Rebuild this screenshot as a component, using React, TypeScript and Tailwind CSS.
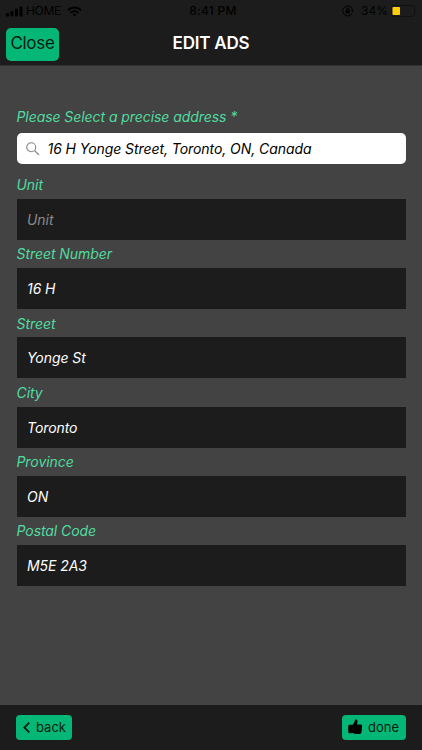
const fields = [
  { label: 'Unit', value: '' },
  { label: 'Street Number', value: '16 H' },
  { label: 'Street', value: 'Yonge St' },
  { label: 'City', value: 'Toronto' },
  { label: 'Province', value: 'ON' },
  { label: 'Postal Code', value: 'M5E 2A3' },
];

function StatusBar() {
  return (
    <div className="grid grid-cols-3 items-center h-[22px] pl-[6px] pr-[5px] text-[12px] text-black">
      <div className="flex items-center">
        <svg width="17" height="11" viewBox="0 0 17 11" fill="currentColor">
          <rect x="0" y="7" width="3" height="3.5" rx="0.8" />
          <rect x="4.5" y="5" width="3" height="5.5" rx="0.8" />
          <rect x="9" y="2.8" width="3" height="7.7" rx="0.8" />
          <rect x="13.5" y="0.5" width="3" height="10" rx="0.8" />
        </svg>
        <span className="ml-[3px] tracking-[-0.3px]">HOME</span>
        <svg className="ml-[6px]" width="15" height="11" viewBox="0 0 15 11" fill="none" stroke="currentColor" strokeWidth="2">
          <path d="M1 4.2 A9.3 9.3 0 0 1 14 4.2" />
          <path d="M3.6 6.9 A5.6 5.6 0 0 1 11.4 6.9" />
          <path d="M7.5 10.5 L5.5 8.6 A2.9 2.9 0 0 1 9.5 8.6 Z" fill="currentColor" stroke="none" />
        </svg>
      </div>
      <div className="pl-[3px] text-center font-medium tracking-[0.3px]">8:41 PM</div>
      <div className="flex items-center justify-end">
        <svg width="12" height="12" viewBox="0 0 12 12" fill="none" stroke="currentColor">
          <path d="M10.5 4.3 A5 5 0 1 0 10.2 8.2" />
          <path d="M8.8 5 L12 5 L10.5 7 Z" fill="currentColor" stroke="none" />
          <rect x="3.7" y="5.2" width="4" height="3.3" fill="currentColor" stroke="none" />
          <path d="M4.6 5.5 V4.2 A1.1 1.1 0 0 1 6.8 4.2 V5.5" />
        </svg>
        <span className="ml-[7px]">34%</span>
        <svg className="ml-[3px]" width="26" height="12" viewBox="0 0 26 12">
          <rect x="0.5" y="0.5" width="23" height="11" rx="2.5" fill="none" stroke="#111" />
          <rect x="1.5" y="2" width="7.5" height="8" rx="0.8" fill="#ffcc08" />
          <path d="M24.5 4 Q26 6 24.5 8 Z" fill="#111" />
        </svg>
      </div>
    </div>
  );
}

function Header() {
  return (
    <header className="h-[66px] bg-[#1c1c1c] border-b border-[#303030]">
      <StatusBar />
      <div className="grid grid-cols-[1fr_auto_1fr] items-center h-[43px] px-[6px]">
        <button className="justify-self-start flex items-center justify-center w-[53px] h-[33px] mt-px rounded-[5px] bg-[#05b777] text-[17px] tracking-[-0.3px] text-[#001c10]">
          Close
        </button>
        <h1 className="text-[17px] font-semibold tracking-[-0.2px] text-white">EDIT ADS</h1>
      </div>
    </header>
  );
}

function Field({ label, value }: { label: string; value: string }) {
  return (
    <label className="block">
      <span className="flex items-center h-[28.25px] text-[#4fdda0]">{label}</span>
      <input
        className="block w-full h-[41px] px-[10.5px] bg-[#1c1c1c] text-white italic placeholder:text-[#8a8a8a] outline-none"
        placeholder={label}
        defaultValue={value}
      />
    </label>
  );
}

export default function App() {
  return (
    <div className="flex flex-col h-[750px] w-[422px] bg-[#434343] font-['Inter',sans-serif]">
      <Header />

      <main className="flex-1 px-[16.5px] pt-[38px] text-[14px] tracking-[-0.07px] italic">
        <p className="h-[28.5px] leading-[26px] text-[#4fdda0]">Please Select a precise address *</p>
        <div className="flex items-center h-[31px] mb-[7px] pl-[9px] rounded-[5px] bg-white">
          <svg className="mt-px" width="14" height="14" viewBox="0 0 14 14" fill="none" stroke="#858585" strokeWidth="1.1">
            <circle cx="5.2" cy="5.2" r="4.5" />
            <path d="M8.5 8.5 L13 13" />
          </svg>
          <input
            className="flex-1 ml-2 text-black italic outline-none"
            defaultValue="16 H Yonge Street, Toronto, ON, Canada"
          />
        </div>
        {fields.map((field) => (
          <Field key={field.label} label={field.label} value={field.value} />
        ))}
      </main>

      <footer className="flex items-start justify-between h-[45px] px-[16px] pt-[10px] bg-[#1c1c1c] text-[13px] text-[#001c10]">
        <button className="flex items-center w-[56px] h-[25px] pl-[7px] rounded-[4px] bg-[#05b777]">
          <svg className="-mt-px" width="7" height="11" viewBox="0 0 7 11" fill="none" stroke="currentColor" strokeWidth="1.8">
            <path d="M6.2 0.7 L1.3 5.5 L6.2 10.3" />
          </svg>
          <span className="ml-[6px]">back</span>
        </button>
        <button className="flex items-center w-[64px] h-[25px] pl-[6px] rounded-[4px] bg-[#05b777]">
          <svg className="-mt-0.5" width="15" height="16" viewBox="0 0 15 16" fill="#000">
            <path d="M0.4 6.2 Q2.4 5.2 4.2 5.9 C5.8 4.6 6.7 3 6.8 1.2 Q7.3 0.2 8.3 0.4 C10 1 9.8 3.4 8.9 5.4 H13 Q14.2 5.6 14.1 7 L13.5 13.2 Q13.2 15 11.6 15 H8 C6.4 15 5.4 14.2 4.2 14 Q2.4 14.6 0.6 13.9 Q-0.2 10 0.4 6.2 Z" />
          </svg>
          <span className="ml-[5px]">done</span>
        </button>
      </footer>
    </div>
  );
}
